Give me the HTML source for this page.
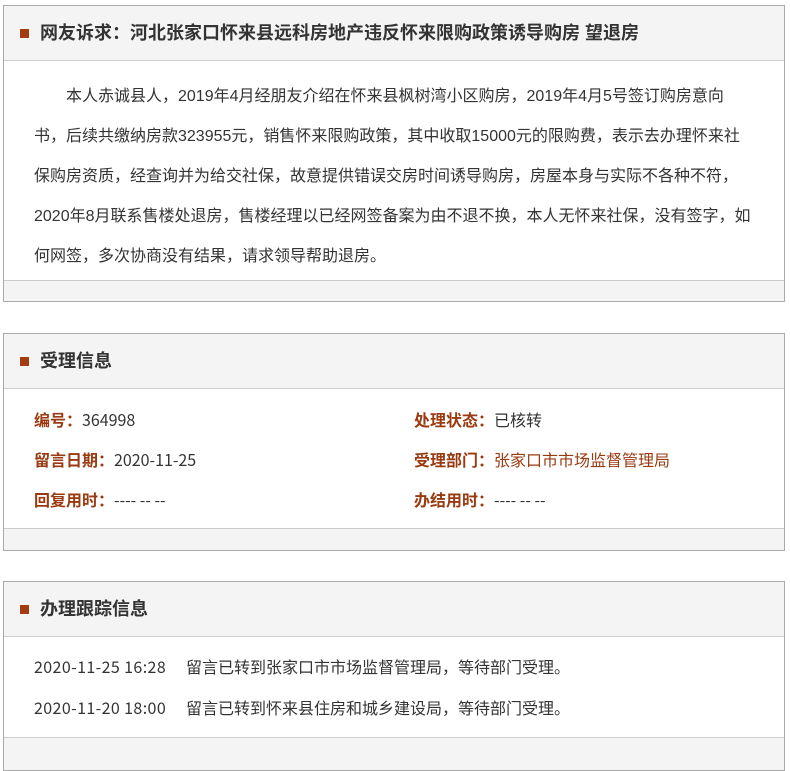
<!DOCTYPE html>
<html><head><meta charset="utf-8"><style>
body{margin:0;background:#fff;font-family:"Liberation Sans","Noto Sans CJK SC",sans-serif;color:#333;font-size:16px;}
.box{position:absolute;left:3px;width:782px;border:1px solid #aaa;background:#fff;box-sizing:border-box;overflow:hidden;}
.hd{height:55px;box-sizing:border-box;background:#f4f4f4;border-bottom:1px solid #ccc;position:relative;}
.hd i{position:absolute;left:16px;top:23px;width:9px;height:9px;background:#a33c0e;}
.hd b{position:absolute;left:36px;top:14px;font-size:18px;line-height:26px;color:#333;}
.ft{background:#f4f4f4;border-top:1px solid #ccc;position:absolute;left:0;right:0;bottom:0;}
.txt{padding:16px 30px 12px 30px;line-height:40px;text-indent:2em;}
.row{position:absolute;line-height:22px;font-family:"Noto Sans CJK SC",sans-serif;}
.l{color:#9a3a10;font-weight:bold;}
.r{color:#9a3a10;}
</style></head><body>
<div class="box" style="top:5px;height:297px;">
<div class="hd"><i></i><b>网友诉求：河北张家口怀来县远科房地产违反怀来限购政策诱导购房 望退房</b></div>
<div class="txt">本人赤诚县人，2019年4月经朋友介绍在怀来县枫树湾小区购房，2019年4月5号签订购房意向书，后续共缴纳房款323955元，销售怀来限购政策，其中收取15000元的限购费，表示去办理怀来社保购房资质，经查询并为给交社保，故意提供错误交房时间诱导购房，房屋本身与实际不各种不符，2020年8月联系售楼处退房，售楼经理以已经网签备案为由不退不换，本人无怀来社保，没有签字，如何网签，多次协商没有结果，请求领导帮助退房。</div>
<div class="ft" style="height:20px;"></div>
</div>
<div class="box" style="top:333px;height:218px;">
<div class="hd"><i></i><b>受理信息</b></div>
<div class="row" style="left:30px;top:74px;"><span class="l">编号：</span>364998</div>
<div class="row" style="left:410px;top:74px;"><span class="l">处理状态：</span>已核转</div>
<div class="row" style="left:30px;top:114px;"><span class="l">留言日期：</span>2020-11-25</div>
<div class="row" style="left:410px;top:114px;"><span class="l">受理部门：</span><span class="r">张家口市市场监督管理局</span></div>
<div class="row" style="left:30px;top:154px;"><span class="l">回复用时：</span>---- -- --</div>
<div class="row" style="left:410px;top:154px;"><span class="l">办结用时：</span>---- -- --</div>
<div class="ft" style="height:21px;"></div>
</div>
<div class="box" style="top:581px;height:190px;">
<div class="hd"><i></i><b>办理跟踪信息</b></div>
<div class="row" style="left:30px;top:73px;letter-spacing:0.4px;">2020-11-25 16:28</div>
<div class="row" style="left:182px;top:73px;">留言已转到张家口市市场监督管理局，等待部门受理。</div>
<div class="row" style="left:30px;top:114px;letter-spacing:0.4px;">2020-11-20 18:00</div>
<div class="row" style="left:182px;top:114px;">留言已转到怀来县住房和城乡建设局，等待部门受理。</div>
<div class="ft" style="height:32px;"></div>
</div>
</body></html>
